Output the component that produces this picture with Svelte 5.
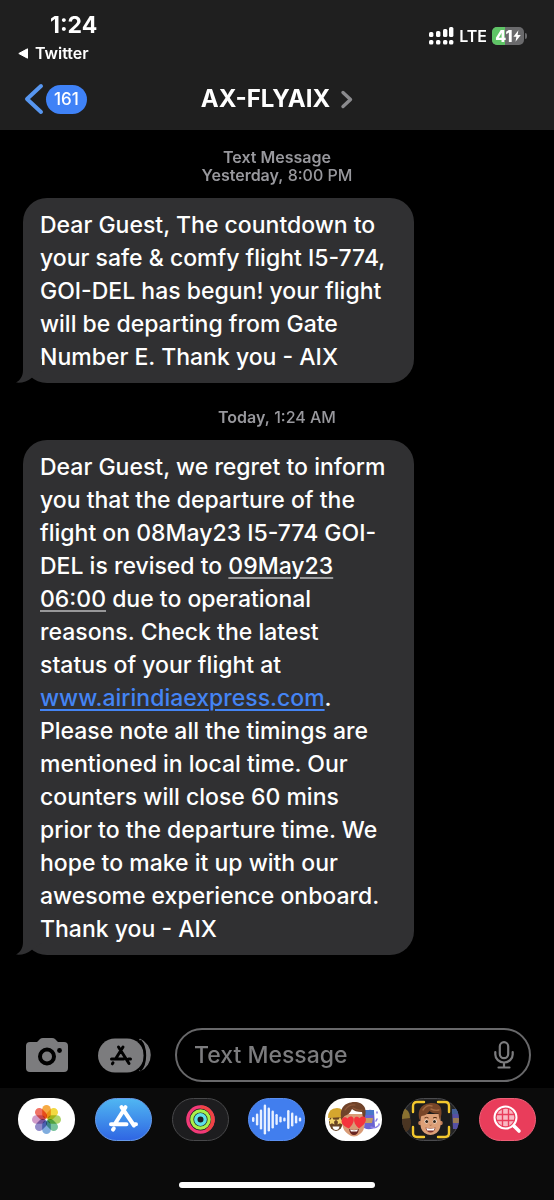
<script lang="ts">
  let draft: string = "";

  const bars = [
    { x: 0, y: 5, h: 5 },
    { x: 7, y: 4, h: 6 },
    { x: 14, y: 2, h: 8 },
    { x: 20, y: 0, h: 10 },
  ];

  const petals = [
    "#f59b23",
    "#f0d21f",
    "#9ccb4e",
    "#5fb98a",
    "#6a9fd8",
    "#7f78c0",
    "#c98bc0",
    "#ee5a4a",
  ];

  const wave = [5, 12, 20, 30, 24, 18, 11, 6, 4, 19, 14, 8, 4];
</script>

<div class="phone">
  <header>
    <div class="status">
      <div class="status-left">
        <div class="clock">1:24</div>
        <a class="return" href="#twitter">
          <svg width="11" height="11" viewBox="0 0 11 11"><path d="M9.5.8v9.4L.8 5.5z" fill="#fff" stroke="#fff" stroke-linejoin="round" /></svg>
          Twitter
        </a>
      </div>
      <div class="status-right">
        <svg width="25" height="18" viewBox="0 0 25 18" fill="#fff">
          {#each bars as bar}
            <rect x={bar.x} y={bar.y} width="4.4" height={bar.h} rx="1.6" />
            <rect x={bar.x} y="13" width="4.4" height="4.6" rx="1.6" />
          {/each}
        </svg>
        <span class="network">LTE</span>
        <div class="battery">
          <div class="level" style="width: 41%"></div>
          <span>41</span>
          <svg width="8" height="12" viewBox="0 0 8 12"><path d="M5.4.2.4 6.8h3L2.5 11.8 7.8 5H4.6z" fill="#fff" /></svg>
        </div>
        <div class="battery-cap"></div>
      </div>
    </div>

    <div class="title-row">
      <button class="back" aria-label="Back, 161 unread">
        <svg width="20" height="32" viewBox="0 0 20 32" fill="none"><path d="M17 3 3 16l14 13" stroke="#5796f0" stroke-width="4" stroke-linecap="round" stroke-linejoin="round" /></svg>
        <span class="unread">161</span>
      </button>
      <button class="contact">
        AX-FLYAIX
        <svg width="13" height="19" viewBox="0 0 13 19" fill="none"><path d="m3 2.5 7.5 7L3 16.5" stroke="#8b8b8e" stroke-width="3.4" stroke-linecap="round" stroke-linejoin="round" /></svg>
      </button>
    </div>
  </header>

  <main>
    <div class="stamp">
      <b>Text Message</b><br />
      <b>Yesterday,</b> 8:00 PM
    </div>
    <div class="bubble">
      Dear Guest, The countdown to your safe &amp; comfy flight I5-774, GOI-DEL has begun! your flight
      will be departing from Gate Number E. Thank you - AIX
      <svg class="tail" width="26" height="24" viewBox="0 0 26 24"><path d="M7 0v11C7 17 4.500 21 0 23.600c6 .6 11.500-1.200 15.500-4.600L26 12V0z" fill="#303032" /></svg>
    </div>

    <div class="stamp later"><b>Today,</b> 1:24 AM</div>
    <div class="bubble">
      Dear Guest, we regret to inform you that the departure of the flight on 08May23 I5-774 GOI-DEL
      is revised to <span class="date">09May23 06:00</span> due to operational reasons. Check the latest
      status of your flight at <a class="link" href="#airindiaexpress">www.airindiaexpress.com</a>. Please
      note all the timings are mentioned in local time. Our counters will close 60 mins prior to the
      departure time. We hope to make it up with our awesome experience onboard. Thank you - AIX
      <svg class="tail" width="26" height="24" viewBox="0 0 26 24"><path d="M7 0v11C7 17 4.500 21 0 23.600c6 .6 11.500-1.200 15.500-4.600L26 12V0z" fill="#303032" /></svg>
    </div>
  </main>

  <form class="compose" on:submit|preventDefault>
    <button type="button" aria-label="Camera">
      <svg width="44" height="35" viewBox="0 0 44 35">
        <path d="M5 4h7l3-3q1-1 3-1h9q2 0 3 1l3 3h6q4 0 4 4v22q0 4-4 4H5q-4 0-4-4V8q0-4 4-4z" fill="#7c7c7e" />
        <circle cx="22" cy="18.500" r="7" fill="none" stroke="#000" stroke-width="4" />
        <circle cx="34.500" cy="12.500" r="2.400" fill="#000" />
      </svg>
    </button>
    <button type="button" class="apps" aria-label="Apps">
      <svg width="53" height="35" viewBox="0 0 53 35">
        <path d="M42 1.500a17 17 0 0 1 0 31c7-7 7-24 0-31z" fill="#7c7c7e" stroke="#7c7c7e" stroke-width="1.500" stroke-linejoin="round" />
        <rect x="0" y=".5" width="46" height="34" rx="17" fill="#7c7c7e" />
        <path d="M42 2.500c6.500 7 6.500 23 0 30" fill="none" stroke="#000" stroke-width="2.600" />
        <g fill="none" stroke="#000" stroke-width="3" stroke-linecap="round">
          <path d="m20.500 9 10.500 16.500M25 9l-7.500 12M13.500 21h12M30.500 21h2M15 24.800l-.6 1" />
        </g>
      </svg>
    </button>
    <div class="field">
      <input type="text" placeholder="Text Message" aria-label="Text Message" bind:value={draft} />
      <button type="button" aria-label="Dictate">
        <svg width="20" height="28" viewBox="0 0 20 28" fill="none" stroke="#7c7c7e" stroke-width="2.200" stroke-linecap="round">
          <rect x="5.800" y="1.200" width="8.400" height="16" rx="4.200" />
          <path d="M1.300 11v2.500a8.700 8 0 0 0 17.400 0V11M10 22v4M4.500 26.500h11" />
        </svg>
      </button>
    </div>
  </form>

  <footer>
    <nav>
      <button aria-label="Photos">
        <svg viewBox="0 0 57 43">
          <rect width="57" height="43" rx="21" fill="#fff" />
          {#each petals as color, i}
            <rect class="petal" x="24.200" y="7" width="8.600" height="13.500" rx="4.300" fill={color} transform="rotate({i * 45} 28.500 21.500)" />
          {/each}
        </svg>
      </button>
      <button aria-label="App Store">
        <svg viewBox="0 0 57 43">
          <defs>
            <linearGradient id="store" x2="0" y2="1"><stop stop-color="#50b7f2" /><stop offset="1" stop-color="#2f65e3" /></linearGradient>
          </defs>
          <rect x=".5" y=".5" width="56" height="42" rx="21" fill="url(#store)" stroke="#6799e8" />
          <g fill="none" stroke="#fff" stroke-width="4" stroke-linecap="round">
            <path d="m26.500 9.200 12.500 18.300M30.500 9.200 20.500 25M16 26.300h15.500M38 26.300h3M18.800 30.500l-.8 1.200" />
          </g>
        </svg>
      </button>
      <button aria-label="Fitness">
        <svg viewBox="0 0 57 43" fill="none">
          <rect x=".5" y=".5" width="56" height="42" rx="21" fill="#1d1d1f" stroke="#48484a" />
          <circle cx="28.500" cy="21.500" r="12.600" stroke="#f23a78" stroke-width="3.400" />
          <path d="M28.500 8.900a12.600 12.600 0 0 1 6 23.600" stroke="#ef4444" stroke-width="3.400" />
          <circle cx="28.500" cy="21.500" r="8.700" stroke="#a8f04a" stroke-width="3.200" />
          <circle cx="28.500" cy="21.500" r="4.700" stroke="#5fe0e8" stroke-width="3.400" />
        </svg>
      </button>
      <button aria-label="Audio">
        <svg viewBox="0 0 57 43">
          <rect x=".5" y=".5" width="56" height="42" rx="21" fill="#417eee" stroke="#5b90f2" />
          {#each wave as h, i}
            <rect x={4 + i * 3.9} y={21.5 - h / 2} width="2.400" height={h} rx="1.200" fill="#e8f0ff" />
          {/each}
        </svg>
      </button>
      <button aria-label="Memoji stickers">
        <svg viewBox="0 0 57 43">
          <clipPath id="pill"><rect width="57" height="43" rx="21" /></clipPath>
          <rect width="57" height="43" rx="21" fill="#fff" />
          <g clip-path="url(#pill)">
            <ellipse cx="11" cy="24" rx="7" ry="9" fill="#694423" />
            <path d="M3 20q0-10 9-10 7 0 7 9z" fill="#d5a62e" />
            <path d="m7 19 1.300 2.500 2.700.3-2 2 .5 2.700L7 25.200l-2.500 1.300.5-2.700-2-2 2.700-.3zM15 19l1.300 2.500 2.700.3-2 2 .5 2.700-2.500-1.300-2.500 1.300.5-2.700-2-2 2.700-.3z" fill="#f3d36c" />
            <path d="M7.500 28.500h7q-.5 3.500-3.500 3.500t-3.500-3.500z" fill="#fff" />
            <path d="M40 14q4-4 9-1l1 16q-5 4-11 1z" fill="#6b63d2" />
            <path d="M40 12h9v5h-9z" fill="#4a77c9" />
            <path d="M40 20h8l-1 5h-7z" fill="#c49a62" />
            <path d="M46 29q4 2 7-1M51 23l1-2M52 14v1M54 27v-1" fill="none" stroke="#8c80e4" stroke-width="1.600" stroke-linecap="round" />
            <path d="M17.500 16h22v10q0 7-4.500 10-6 5-12 0-5.500-4-5.500-10z" fill="#d99b76" />
            <path d="M16.500 22c-2-8 0-14 6-16.500C29 2.500 37 4 39.500 9c2 4 1 9-.5 13-1-2-1.500-5-2-8-5 0-8-1-10-3-2 4-4 6-7.500 7z" fill="#70432a" />
            <path d="M20 12q4-6 10-5M28 10q5 3 9 2" fill="none" stroke="#8d583a" stroke-width="1.200" stroke-linecap="round" />
            <path d="M24 30.500c-8-3.500-8-7-7-9.500 1.500-2.500 4-2.300 5.500-.5 2-2.500 5-2.500 6-.2 1 2.800-1 6.700-4.500 10.200zM34 30.500c-4-3.500-5.500-7-4.800-9.800.8-2.500 3.800-2.400 5.300-.4 1.500-2 5-2.500 6.200 0 1.200 3.200-2 7.200-6.700 10.200z" fill="#f5333c" />
            <path d="M24 31q5 2 10 0-1 6-5 6t-5-6z" fill="#68231f" />
            <path d="M25 31.500q4 1.500 8 0l-1 2h-6z" fill="#fff" />
          </g>
        </svg>
      </button>
      <button aria-label="Memoji">
        <svg viewBox="0 0 57 43">
          <rect x=".5" y=".5" width="56" height="42" rx="21" fill="#242425" stroke="#4b4b4e" />
          <g clip-path="url(#pill)">
            <ellipse cx="3" cy="25" rx="6" ry="9" fill="#4a3522" />
            <path d="M0 10q8 1 8 10l-8 1z" fill="#8a7130" />
            <path d="M50 13h7v18h-6z" fill="#5650a3" />
            <path d="M50 11h7v5h-7z" fill="#425e95" />
            <path d="M51 20h6v5h-6z" fill="#9a7b55" />
          </g>
          <rect x="9" y="2" width="39" height="39" rx="5" fill="#1b1b1c" />
          <circle cx="18.500" cy="25" r="2.300" fill="#c58059" />
          <circle cx="38.500" cy="25" r="2.300" fill="#c58059" />
          <path d="M18.500 16h20v10q0 6-4 9-6 4-12 0-4-3-4-9z" fill="#dda078" />
          <path d="M17.500 22c-2-8 0-13 5.500-15.500C29 4 36 4.500 38.500 9c1.800 4 1 9-.5 13-1-2-1.200-4-1.500-6.500-4.500 0-7-.5-9-2.500-2 3-4 4.500-8 5z" fill="#784528" />
          <path d="M21 12q4-6 9-4M29 11q4 2 8 1" fill="none" stroke="#a36a43" stroke-width="1.400" stroke-linecap="round" />
          <ellipse cx="24.500" cy="23.500" rx="1.900" ry="2.100" fill="#fff" />
          <ellipse cx="32.700" cy="23.500" rx="1.900" ry="2.100" fill="#fff" />
          <circle cx="24.700" cy="23.500" r="1.500" fill="#382414" />
          <circle cx="32.500" cy="23.500" r="1.500" fill="#382414" />
          <path d="M22.500 20q2-1.300 4 0M31 20q2-1.300 4 0" fill="none" stroke="#573018" />
          <path d="M27.700 27q.9.800 1.800 0" fill="none" stroke="#ac694b" />
          <path d="M23.500 29.500q5 2 10 0-1 5-5 5t-5-5z" fill="#7a2f28" />
          <path d="M24.200 30q4.300 1.500 8.600 0l-1 2.500h-6.600z" fill="#fff" />
          <path d="M11 14V8q0-4 4-4h7M36 4h7q4 0 4 4v6M47 29v6q0 4-4 4h-7M22 39h-7q-4 0-4-4v-6" fill="none" stroke="#f3c82e" stroke-width="2.400" stroke-linecap="round" />
        </svg>
      </button>
      <button aria-label="Image search">
        <svg viewBox="0 0 57 43" fill="none" stroke="#fff" stroke-linecap="round">
          <rect x=".5" y=".5" width="56" height="42" rx="21" fill="#e93d5b" stroke="#ee6078" />
          <circle cx="26.500" cy="19.500" r="8.800" fill="#f9b9c3" stroke="none" />
          <path d="M23.500 11.500v16M29.500 11.500v16M18.500 16.500h16M18.500 22.500h16" stroke="#e93d5b" stroke-width="1.400" />
          <circle cx="26.500" cy="19.500" r="11" stroke-width="2" />
          <path d="m35 28 5 5" stroke-width="3.600" />
        </svg>
      </button>
    </nav>
    <div class="home"></div>
  </footer>
</div>

<style>
  :global(body) {
    background: #000;
  }

  .phone {
    min-height: 100vh;
    display: flex;
    flex-direction: column;
    background: #000;
    color: #fff;
    font-family: Inter, "Liberation Sans", sans-serif;
  }

  button {
    margin: 0;
    padding: 0;
    border: 0;
    background: none;
    color: inherit;
    font: inherit;
    cursor: pointer;
  }

  svg {
    display: block;
    flex: none;
  }

  header {
    background: #1f1f1f;
    padding-bottom: 15px;
  }

  .status {
    display: flex;
    justify-content: space-between;
    align-items: flex-start;
    padding: 12px 27px 0 18px;
  }

  .clock {
    padding-left: 32px;
    font-size: 23px;
    line-height: 26px;
    font-weight: 700;
  }

  .return {
    display: flex;
    align-items: center;
    gap: 6px;
    margin-top: 5px;
    font-size: 16px;
    line-height: 20px;
    font-weight: 600;
    color: #fff;
    text-decoration: none;
  }

  .status-right {
    display: flex;
    align-items: center;
    padding-top: 15px;
  }

  .network {
    margin: 0 5px;
    font-size: 16px;
    line-height: 18px;
    font-weight: 600;
  }

  .battery {
    position: relative;
    display: flex;
    align-items: center;
    justify-content: center;
    width: 32px;
    height: 18px;
    border-radius: 5px;
    overflow: hidden;
    background: #6a6a6c;
    font-size: 16px;
    font-weight: 800;
  }

  .battery span,
  .battery svg {
    position: relative;
  }

  .level {
    position: absolute;
    inset: 0 auto 0 0;
    background: #5fc466;
  }

  .battery-cap {
    width: 2px;
    height: 6px;
    margin-left: 1px;
    border-radius: 0 2px 2px 0;
    background: #6a6a6c;
  }

  .title-row {
    display: grid;
    grid-template-columns: 1fr auto 1fr;
    align-items: center;
    padding: 20px 24px 0;
  }

  .back {
    display: flex;
    align-items: center;
    gap: 2px;
    justify-self: start;
  }

  .unread {
    padding: 0 8px;
    border-radius: 15px;
    background: #3f82f7;
    font-size: 17px;
    line-height: 29px;
    font-weight: 500;
  }

  .contact {
    display: flex;
    align-items: center;
    gap: 10px;
    font-size: 24px;
    line-height: 30px;
    font-weight: 700;
  }

  main {
    flex: 1;
    padding: 18px 23px 0;
  }

  .stamp {
    margin-bottom: 14px;
    color: #98989d;
    font-size: 16px;
    line-height: 18px;
    font-weight: 500;
    text-align: center;
  }

  .stamp b {
    font-weight: 600;
  }

  .later {
    margin-top: 25px;
  }

  .bubble {
    position: relative;
    box-sizing: border-box;
    width: 77%;
    padding: 11px 24px 9px 17px;
    border-radius: 24px;
    background: #303032;
    font-size: 23px;
    line-height: 33px;
    font-weight: 500;
  }

  .tail {
    position: absolute;
    left: -7px;
    bottom: 0;
  }

  .date,
  .link {
    text-decoration: underline;
    text-decoration-thickness: 2px;
    text-underline-offset: 3px;
  }

  .date {
    text-decoration-color: #98989a;
  }

  .link {
    color: #4484f4;
  }

  .compose {
    display: flex;
    align-items: center;
    padding: 24px 23px 6px 25px;
  }

  .apps {
    margin: 0 24px 0 29px;
  }

  .field {
    flex: 1;
    min-width: 0;
    display: flex;
    align-items: center;
    box-sizing: border-box;
    height: 54px;
    padding: 0 15px 0 17px;
    border: 2px solid #68686a;
    border-radius: 27px;
  }

  input {
    flex: 1;
    min-width: 0;
    padding: 0;
    border: 0;
    outline: 0;
    background: none;
    color: #fff;
    font-family: inherit;
    font-size: 23px;
    font-weight: 500;
  }

  input::placeholder {
    color: #7c7c7e;
    opacity: 1;
  }

  footer {
    padding: 10px 18px 12px;
    background: #0b0b0b;
  }

  nav {
    display: flex;
    justify-content: space-between;
  }

  nav svg {
    width: 57px;
    height: 43px;
  }

  .petal {
    mix-blend-mode: multiply;
    opacity: 0.85;
  }

  .home {
    width: 36%;
    height: 6px;
    margin: 41px auto 0;
    border-radius: 3px;
    background: #fff;
  }

  .home {
    width: 38%;
  }
</style>
